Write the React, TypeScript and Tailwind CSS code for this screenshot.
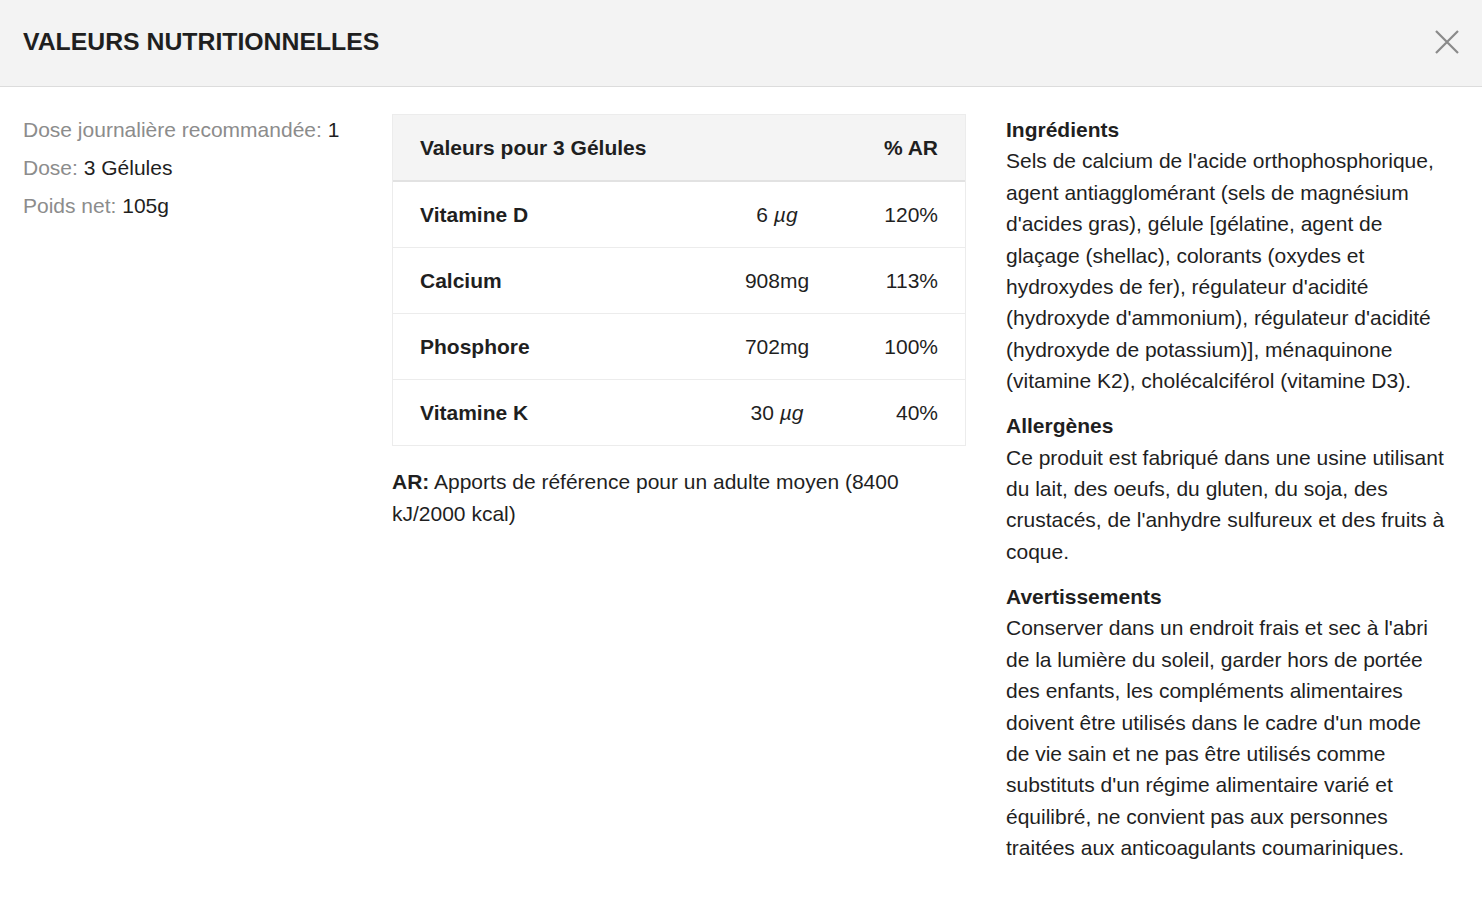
const rows = [
  { name: "Vitamine D", value: "6 ", unit: "µg", italic: true, pct: "120%" },
  { name: "Calcium", value: "908mg", unit: "", italic: false, pct: "113%" },
  { name: "Phosphore", value: "702mg", unit: "", italic: false, pct: "100%" },
  { name: "Vitamine K", value: "30 ", unit: "µg", italic: true, pct: "40%" },
]

const sections = [
  {
    title: "Ingrédients",
    text: "Sels de calcium de l'acide orthophosphorique, agent antiagglomérant (sels de magnésium d'acides gras), gélule [gélatine, agent de glaçage (shellac), colorants (oxydes et hydroxydes de fer), régulateur d'acidité (hydroxyde d'ammonium), régulateur d'acidité (hydroxyde de potassium)], ménaquinone (vitamine K2), cholécalciférol (vitamine D3).",
  },
  {
    title: "Allergènes",
    text: "Ce produit est fabriqué dans une usine utilisant du lait, des oeufs, du gluten, du soja, des crustacés, de l'anhydre sulfureux et des fruits à coque.",
  },
  {
    title: "Avertissements",
    text: "Conserver dans un endroit frais et sec à l'abri de la lumière du soleil, garder hors de portée des enfants, les compléments alimentaires doivent être utilisés dans le cadre d'un mode de vie sain et ne pas être utilisés comme substituts d'un régime alimentaire varié et équilibré, ne convient pas aux personnes traitées aux anticoagulants coumariniques.",
  },
]

export default function App() {
  return (
    <div className="min-h-screen bg-white font-['Liberation_Sans',Arial,sans-serif] text-[21px] text-[#1f1f1f]">
      {/* En-tête */}
      <div className="flex h-[87px] items-center justify-between border-b border-[#dcdcdc] bg-[#f3f3f3] pb-[3px] pl-[23px] pr-[23px]">
        <h1 className="text-[24.8px] font-bold text-[#1f1f1f]">VALEURS NUTRITIONNELLES</h1>
        <button aria-label="Fermer" className="flex h-6 w-6 items-center justify-center text-[#8a8a8a]">
          <svg width="24" height="24" viewBox="0 0 24 24" fill="none" stroke="currentColor" strokeWidth="2.2">
            <path d="M1 1L23 23M23 1L1 23" />
          </svg>
        </button>
      </div>

      <div className="flex px-[23px] pt-[27px]">
        {/* Doses */}
        <div className="mr-[40px] w-[329px] shrink-0 leading-[31px]">
          <p className="mb-[7px]">
            <span className="text-[#8c8c8c]">Dose journalière recommandée: </span>1
          </p>
          <p className="mb-[7px]">
            <span className="text-[#8c8c8c]">Dose: </span>3 Gélules
          </p>
          <p className="mb-[7px]">
            <span className="text-[#8c8c8c]">Poids net: </span>105g
          </p>
        </div>

        {/* Tableau */}
        <div className="mr-[40px] w-[574px] shrink-0">
          <div className="border border-[#ececec]">
            <div className="flex h-[67px] items-center border-b-2 border-[#e2e2e2] bg-[#f4f4f4] pl-[27px] pr-[27px] font-bold">
              <span className="flex-1">Valeurs pour 3 Gélules</span>
              <span>% AR</span>
            </div>
            {rows.map((r, i) => (
              <div
                key={r.name}
                className={`flex items-center pl-[27px] ${i < rows.length - 1 ? "h-[66px] border-b border-[#ececec]" : "h-[65px]"}`}
              >
                <span className="flex-1 font-bold">{r.name}</span>
                <span className="w-[120px] text-center">
                  {r.value}
                  {r.italic && <span className="italic">{r.unit}</span>}
                </span>
                <span className="w-[128px] pr-[27px] text-right">{r.pct}</span>
              </div>
            ))}
          </div>
          <p className="mt-[20px] leading-[32px]">
            <span className="font-bold">AR:</span> Apports de référence pour un adulte moyen (8400 kJ/2000 kcal)
          </p>
        </div>

        {/* Informations */}
        <div className="flex-1 pr-[11px] leading-[31.4px]">
          {sections.map((s) => (
            <div key={s.title} className="mb-[13.6px]">
              <h2 className="font-bold">{s.title}</h2>
              <p>{s.text}</p>
            </div>
          ))}
        </div>
      </div>
    </div>
  )
}
